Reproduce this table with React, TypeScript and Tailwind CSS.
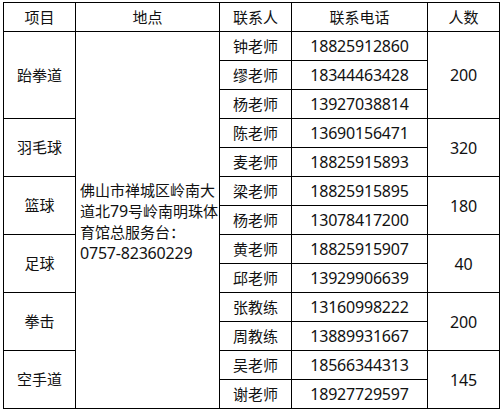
const groups = [
  {
    name: '跆拳道',
    count: '200',
    span: 'row-span-3',
    people: [
      ['钟老师', '18825912860'],
      ['缪老师', '18344463428'],
      ['杨老师', '13927038814'],
    ],
  },
  {
    name: '羽毛球',
    count: '320',
    span: 'row-span-2',
    people: [
      ['陈老师', '13690156471'],
      ['麦老师', '18825915893'],
    ],
  },
  {
    name: '篮球',
    count: '180',
    span: 'row-span-2',
    people: [
      ['梁老师', '18825915895'],
      ['杨老师', '13078417200'],
    ],
  },
  {
    name: '足球',
    count: '40',
    span: 'row-span-2',
    people: [
      ['黄老师', '18825915907'],
      ['邱老师', '13929906639'],
    ],
  },
  {
    name: '拳击',
    count: '200',
    span: 'row-span-2',
    people: [
      ['张教练', '13160998222'],
      ['周教练', '13889931667'],
    ],
  },
  {
    name: '空手道',
    count: '145',
    span: 'row-span-2',
    people: [
      ['吴老师', '18566344313'],
      ['谢老师', '18927729597'],
    ],
  },
];

const cell = 'bg-white flex items-center justify-center';
const num = 'text-[16px] tracking-[-0.2px]';

export default function App() {
  return (
    <div
      className="w-[504px] h-[413px] bg-white pt-[2px] pl-[3px] text-[15px] text-[#111] leading-none"
      style={{ fontFamily: '"Noto Sans", "Noto Sans CJK SC", sans-serif' }}
    >
      <div className="grid w-[497px] grid-cols-[71px_143px_71px_135px_71px] auto-rows-[28px] gap-px bg-black p-px">
        {/* header */}
        <div className={`${cell} col-start-1`}>项目</div>
        <div className={`${cell} col-start-2`}>地点</div>
        <div className={`${cell} col-start-3`}>联系人</div>
        <div className={`${cell} col-start-4`}>联系电话</div>
        <div className={`${cell} col-start-5`}>人数</div>

        {groups.map((g, gi) =>
          g.people.map(([who, phone], i) => (
            <>
              {i === 0 && (
                <div key={`n${gi}`} className={`${cell} col-start-1 ${g.span}`}>
                  {g.name}
                </div>
              )}
              {gi === 0 && i === 0 && (
                <div className="bg-white col-start-2 row-span-13 flex items-center pl-[4px] pt-[4px] leading-[21px]">
                  <div>
                    佛山市禅城区岭南大
                    <br />
                    道北<span className={num}>79</span>号岭南明珠体
                    <br />
                    育馆总服务台：
                    <br />
                    <span className={num}>0757-82360229</span>
                  </div>
                </div>
              )}
              <div className={`${cell} col-start-3`}>{who}</div>
              <div className={`${cell} col-start-4 ${num}`}>{phone}</div>
              {i === 0 && (
                <div className={`${cell} col-start-5 ${g.span} ${num}`}>{g.count}</div>
              )}
            </>
          ))
        )}
      </div>
    </div>
  );
}
